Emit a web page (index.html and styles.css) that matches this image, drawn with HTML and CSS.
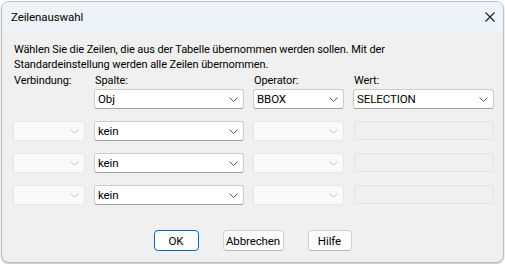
FILE: index.html
```html
<!DOCTYPE html>
<html lang="de">
<head>
    <meta charset="UTF-8">
    <title>Zeilenauswahl</title>
    <link rel="stylesheet" href="styles.css">
</head>
<body>
    <div class="window">
        <div class="titlebar">
            <span class="title">Zeilenauswahl</span>
            <svg class="close" width="10" height="10" viewBox="0 0 10 10">
                <path d="M0.5 0.5 L9.5 9.5 M9.5 0.5 L0.5 9.5" stroke="#1b1b1b" stroke-width="1.1" fill="none"/>
            </svg>
        </div>
        <div class="content">
            <p class="intro">Wählen Sie die Zeilen, die aus der Tabelle übernommen werden sollen. Mit der<br>Standardeinstellung werden alle Zeilen übernommen.</p>

            <div class="labels">
                <div class="label">Verbindung:</div>
                <div class="label">Spalte:</div>
                <div class="label">Operator:</div>
                <div class="label">Wert:</div>
            </div>

            <div class="grid">
                <div class="empty"></div>
                <div class="combo"><span>Obj</span><svg class="chev" width="9" height="5" viewBox="0 0 9 5"><path d="M0.5 0.5 L4.5 4.5 L8.5 0.5"/></svg></div>
                <div class="combo"><span>BBOX</span><svg class="chev" width="9" height="5" viewBox="0 0 9 5"><path d="M0.5 0.5 L4.5 4.5 L8.5 0.5"/></svg></div>
                <div class="combo"><span>SELECTION</span><svg class="chev" width="9" height="5" viewBox="0 0 9 5"><path d="M0.5 0.5 L4.5 4.5 L8.5 0.5"/></svg></div>

                <div class="combo disabled"><span></span><svg class="chev" width="9" height="5" viewBox="0 0 9 5"><path d="M0.5 0.5 L4.5 4.5 L8.5 0.5"/></svg></div>
                <div class="combo"><span>kein</span><svg class="chev" width="9" height="5" viewBox="0 0 9 5"><path d="M0.5 0.5 L4.5 4.5 L8.5 0.5"/></svg></div>
                <div class="combo disabled"><span></span><svg class="chev" width="9" height="5" viewBox="0 0 9 5"><path d="M0.5 0.5 L4.5 4.5 L8.5 0.5"/></svg></div>
                <div class="edit disabled"></div>

                <div class="combo disabled"><span></span><svg class="chev" width="9" height="5" viewBox="0 0 9 5"><path d="M0.5 0.5 L4.5 4.5 L8.5 0.5"/></svg></div>
                <div class="combo"><span>kein</span><svg class="chev" width="9" height="5" viewBox="0 0 9 5"><path d="M0.5 0.5 L4.5 4.5 L8.5 0.5"/></svg></div>
                <div class="combo disabled"><span></span><svg class="chev" width="9" height="5" viewBox="0 0 9 5"><path d="M0.5 0.5 L4.5 4.5 L8.5 0.5"/></svg></div>
                <div class="edit disabled"></div>

                <div class="combo disabled"><span></span><svg class="chev" width="9" height="5" viewBox="0 0 9 5"><path d="M0.5 0.5 L4.5 4.5 L8.5 0.5"/></svg></div>
                <div class="combo"><span>kein</span><svg class="chev" width="9" height="5" viewBox="0 0 9 5"><path d="M0.5 0.5 L4.5 4.5 L8.5 0.5"/></svg></div>
                <div class="combo disabled"><span></span><svg class="chev" width="9" height="5" viewBox="0 0 9 5"><path d="M0.5 0.5 L4.5 4.5 L8.5 0.5"/></svg></div>
                <div class="edit disabled"></div>
            </div>

            <div class="buttons">
                <button class="button default">OK</button>
                <button class="button wide">Abbrechen</button>
                <button class="button">Hilfe</button>
            </div>
        </div>
    </div>
</body>
</html>
```

FILE: styles.css
```css
html, body {
    margin: 0;
    padding: 0;
}
body {
    width: 505px;
    height: 264px;
    background-color: #ffffff;
    font-family: Roboto, "Noto Sans", sans-serif;
    font-size: 11px;
    letter-spacing: -0.1px;
    color: #000000;
}
.window {
    box-sizing: border-box;
    width: 503px;
    height: 262px;
    margin: 1px;
    border: 1px solid #bfbfbf;
    border-radius: 8px;
    overflow: hidden;
    background-color: #f0f0f0;
    box-shadow: 0 1px 2px rgba(0,0,0,0.25);
}
.titlebar {
    height: 30px;
    background-color: #eef3f9;
    display: flex;
    align-items: center;
    justify-content: space-between;
    padding: 0 8px 0 9px;
}
.title {
    font-size: 11.5px;
    margin-top: -1px;
}
.close {
    margin-top: -1px;
}
.content {
    padding: 10px 0 0 11px;
}
.intro {
    margin: 0 0 0 1px;
    line-height: 15px;
    white-space: nowrap;
}
.labels,
.grid {
    display: grid;
    grid-template-columns: 72px 150px 91px 141px;
    column-gap: 9px;
}
.labels {
    margin-top: 1px;
    line-height: 15px;
}
.label {
    padding-left: 1px;
}
.grid {
    grid-template-rows: 20px 20px 20px 20px;
    row-gap: 12px;
    margin-top: 1px;
}
.combo {
    box-sizing: border-box;
    height: 20px;
    background-color: #ffffff;
    border: 1px solid #cccccc;
    border-bottom-color: #a0a0a0;
    border-radius: 3px;
    display: flex;
    align-items: center;
    justify-content: space-between;
    padding: 0 5px 0 3px;
}
.combo span {
    line-height: 18px;
    font-size: 11.5px;
}
.chev {
    fill: none;
    stroke: #5f5f5f;
    stroke-width: 1;
}
.combo.disabled {
    background-color: #fafafa;
    border-color: #e6e6e6;
}
.combo.disabled .chev {
    stroke: #c4c4c4;
}
.edit.disabled {
    box-sizing: border-box;
    height: 19px;
    margin-left: 1px;
    border: 1px solid #e3e3e3;
    background-color: #f0f0f0;
}
.buttons {
    display: flex;
    justify-content: center;
    gap: 24px;
    margin-top: 25px;
    padding-right: 11px;
}
.button {
    box-sizing: border-box;
    width: 44px;
    height: 21px;
    padding: 0;
    font-family: inherit;
    font-size: 11.5px;
    letter-spacing: -0.1px;
    color: #000000;
    background-color: #fdfdfd;
    border: 1px solid #d0d0d0;
    border-bottom-color: #b5b5b5;
    border-radius: 4px;
}
.button.default {
    width: 45px;
    border: 1px solid #0067c0;
}
.button.wide {
    width: 61px;
}
```
